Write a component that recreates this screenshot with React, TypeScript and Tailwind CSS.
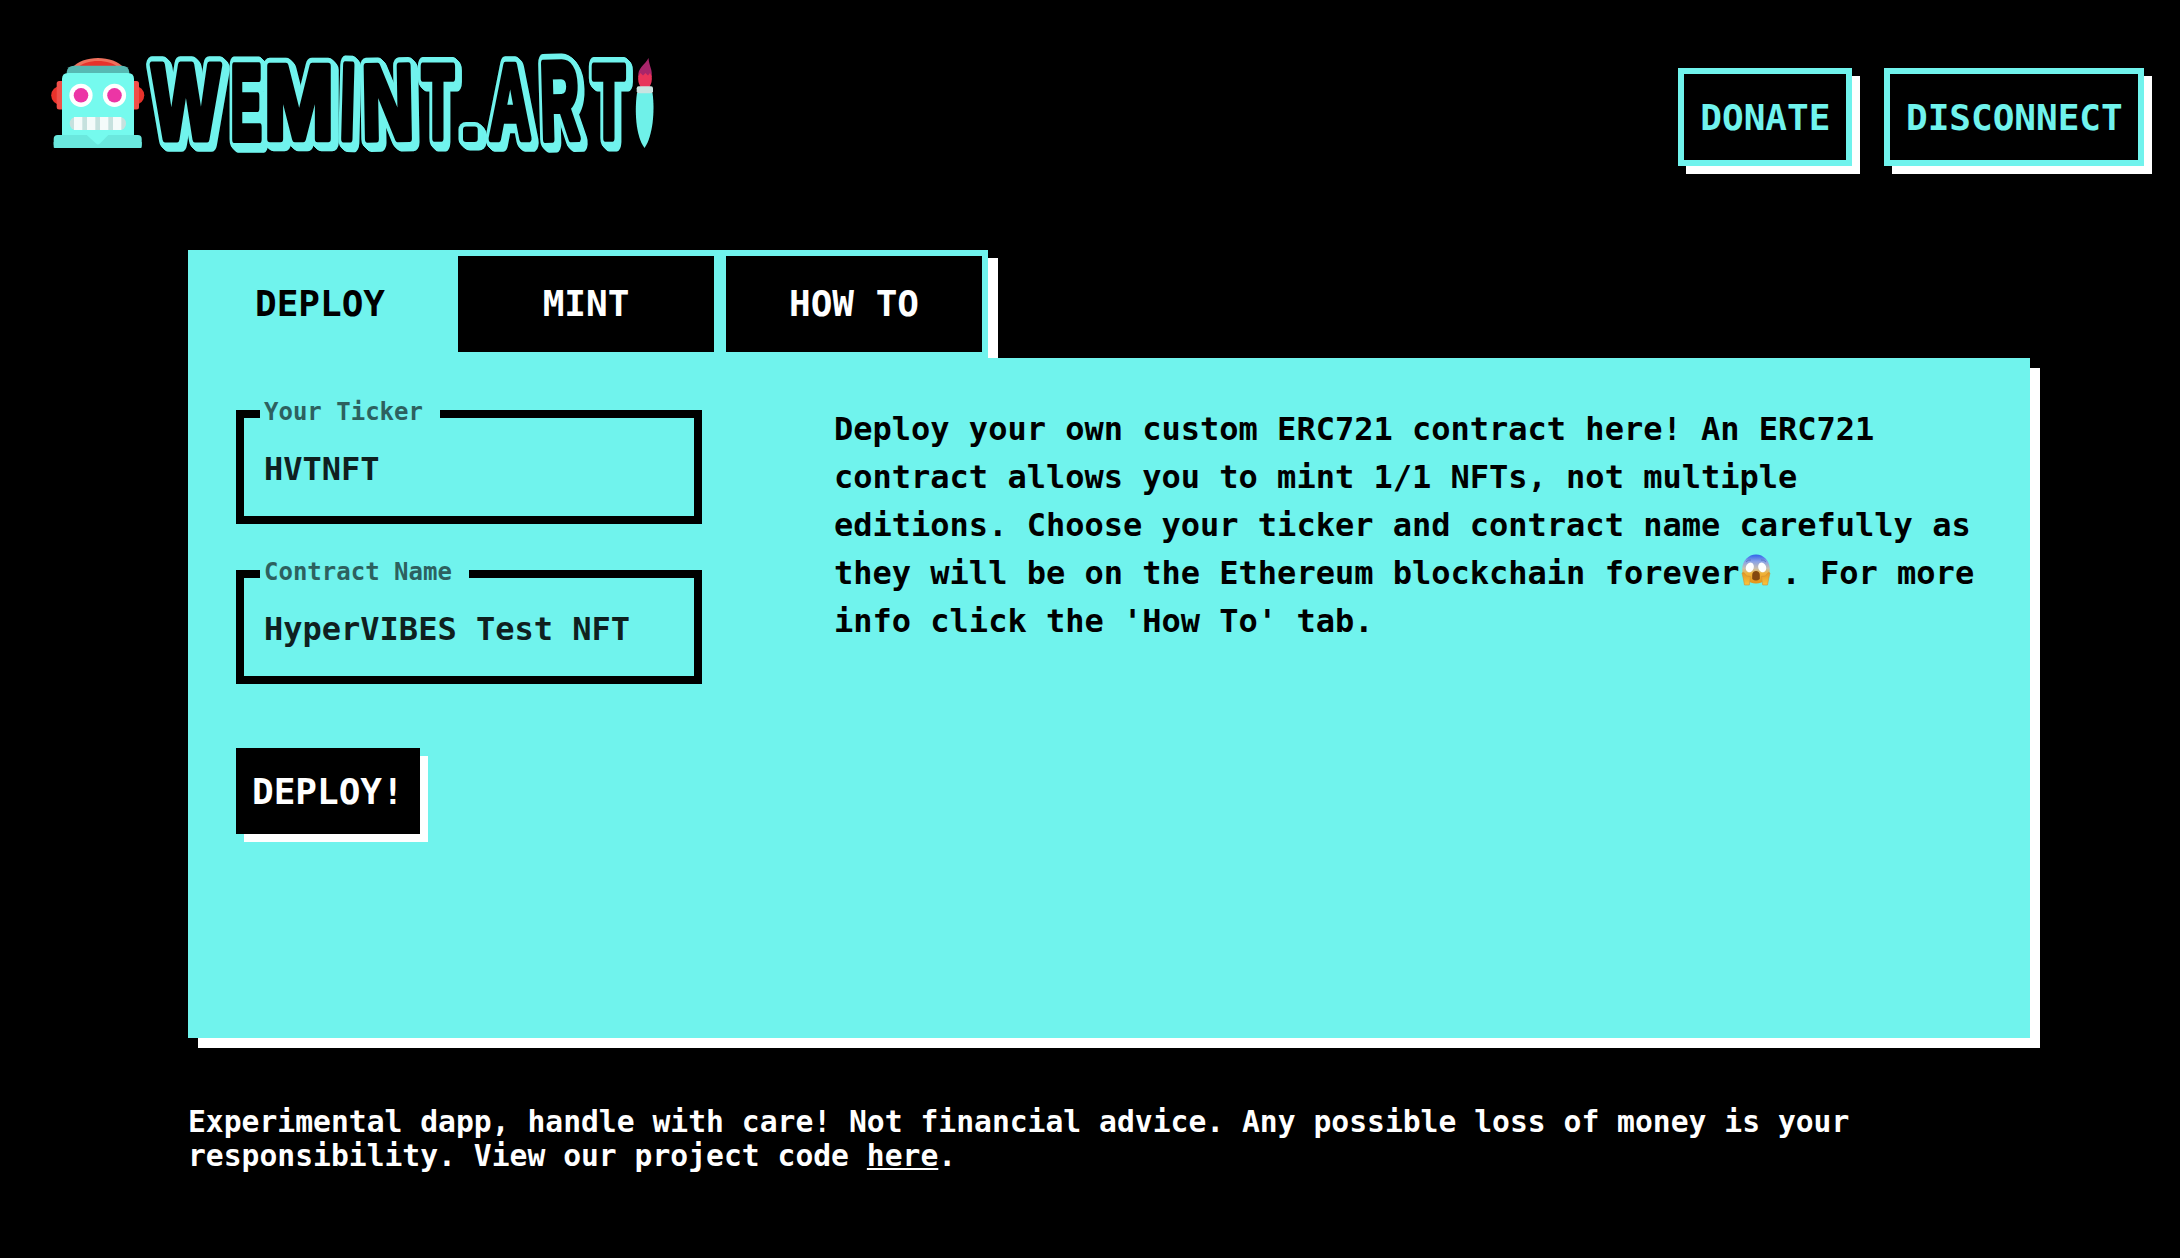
import React from "react";

type Glyph = { ch: string; ink: [number, number]; box: [number, number, number, number]; rotate?: number };

// ink: horizontal extent of the glyph at 100 units; box: left, top, right, bottom on the logo canvas.
const GLYPHS: Glyph[] = [
  { ch: "W", ink: [0.3, 94.2], box: [149, 62, 223, 142] },
  { ch: "E", ink: [7.3, 62.3], box: [231, 63, 263, 142] },
  { ch: "M", ink: [7.1, 76.1], box: [267, 63, 331, 142] },
  { ch: "I", ink: [7.2, 21.6], box: [341, 62, 355, 142], rotate: 1.5 },
  { ch: "N", ink: [7.5, 64], box: [364, 63, 411, 142], rotate: -1 },
  { ch: "T", ink: [2.1, 59], box: [420, 63, 456, 141] },
  { ch: ".", ink: [7.2, 21], box: [463, 127, 478, 142] },
  { ch: "A", ink: [0, 71.8], box: [486, 63, 534, 142] },
  { ch: "R", ink: [7.3, 71.6], box: [541, 60, 582, 142], rotate: -1.5 },
  { ch: "T", ink: [2.1, 59], box: [591, 63, 627, 141] },
];

const INSET = 3.2;

function glyphTransform({ ch, ink, box, rotate = 0 }: Glyph) {
  const [l, t, r, b] = box;
  const inkHeight = ch === "." ? 13.7 : 68.8;
  const sx = (r - l - INSET * 2) / (ink[1] - ink[0]);
  const sy = (b - t - INSET * 2) / inkHeight;
  return `rotate(${rotate} ${(l + r) / 2} ${(t + b) / 2}) translate(${l + INSET - ink[0] * sx} ${b - INSET}) scale(${sx} ${sy})`;
}

function Logo() {
  return (
    <svg className="block h-[120px] w-[630px]" viewBox="40 40 630 120" aria-label="WEMINT.ART">
      <defs>
        <g
          id="wordmark"
          fontFamily="'Liberation Sans', Arial, sans-serif"
          fontWeight="700"
          fontSize="100"
          strokeLinejoin="round"
        >
          {GLYPHS.map((g, i) => (
            <text key={i} transform={glyphTransform(g)} vectorEffect="non-scaling-stroke">
              {g.ch}
            </text>
          ))}
        </g>
      </defs>

      {/* robot */}
      <circle cx="60.5" cy="95.3" r="9.3" fill="#e8322b" />
      <circle cx="135" cy="95.3" r="9.3" fill="#e8322b" />
      <rect x="56.7" y="81" width="8" height="28.5" rx="2.5" fill="#f04f49" />
      <rect x="131" y="81" width="8" height="28.5" rx="2.5" fill="#f04f49" />
      <path d="M72 68 C82 54.5 114 54.5 124 68 Z" fill="#ef705c" />
      <path d="M77 68 C86 58.5 110 58.5 119 68 Z" fill="#e8322b" />
      <path d="M66.7 74 V72 Q67.5 65.8 74 65.8 H122 Q128.5 65.8 129.3 72 V74 Z" fill="#57b9b3" />
      <rect x="53.7" y="135" width="88" height="13" rx="4" fill="#6ae8de" />
      <path d="M53.7 142 H141.7 V147 Q141.7 148 140.7 148 H54.7 Q53.7 148 53.7 147 Z" fill="#6ae8de" />
      <path d="M62 135 V79 Q62 73 68 73 H128 Q134 73 134 79 V135 H108.3 L100 143.5 Q98 145.5 96 143.5 L86.7 135 Z" fill="#75faee" />
      <circle cx="81" cy="95.3" r="11.6" fill="#fff" />
      <circle cx="114.5" cy="95.3" r="11.6" fill="#fff" />
      <circle cx="81" cy="95.3" r="7.3" fill="#ec35a5" />
      <circle cx="114.5" cy="95.3" r="7.3" fill="#ec35a5" />
      <rect x="69.7" y="117" width="56.3" height="13" rx="6.3" fill="#c6e1de" />
      <rect x="74" y="117" width="8.3" height="13" fill="#f4fbfa" />
      <rect x="87" y="117" width="8.3" height="13" fill="#f4fbfa" />
      <rect x="100" y="117" width="8.3" height="13" fill="#f4fbfa" />
      <rect x="113" y="117" width="8.3" height="13" fill="#f4fbfa" />

      {/* wordmark: extruded outline under black faces */}
      <g className="[filter:drop-shadow(1px_1px_0_#70f3ed)_drop-shadow(2px_2px_0_#70f3ed)_drop-shadow(1px_1px_0_#70f3ed)]">
        <use href="#wordmark" fill="#70f3ed" stroke="#70f3ed" strokeWidth="15" />
      </g>
      <use href="#wordmark" fill="#000" stroke="#000" strokeWidth="6" />

      {/* brush */}
      <path d="M648.5 58 C649 66 653 70 651.5 77 H638.5 C637 68 645 65 648.5 58 Z" fill="#a8256a" />
      <path d="M638.3 76 L640.5 73 L643 75.5 L645.5 73 L648 75.5 L650 73 L651.7 76 Q652.5 82 649.5 87 H640.5 Q637.5 82 638.3 76 Z" fill="#e8335a" />
      <path d="M637 93 H652.5 C655 110 653 136 644.5 148 C635.5 136 634.5 110 637 93 Z" fill="#6ff1e9" />
      <rect x="636.7" y="86.3" width="16.3" height="7" rx="2" fill="#c9e4e1" />
    </svg>
  );
}

function ScreamEmoji() {
  return (
    <svg className="ml-[2px] mr-[10px] inline-block h-[32px] w-[30px] align-[-2px]" viewBox="0 0 30 32">
      <defs>
        <linearGradient id="face" x1="0" y1="0" x2="0" y2="1">
          <stop offset="0" stopColor="#2f62ea" />
          <stop offset="0.25" stopColor="#8ba3e6" />
          <stop offset="0.48" stopColor="#c9bfae" />
          <stop offset="0.65" stopColor="#f0b43a" />
          <stop offset="1" stopColor="#e59318" />
        </linearGradient>
        <linearGradient id="hand" x1="0" y1="0" x2="0" y2="1">
          <stop offset="0" stopColor="#e39422" />
          <stop offset="1" stopColor="#fbc53c" />
        </linearGradient>
      </defs>
      <ellipse cx="15" cy="15" rx="13.8" ry="14.5" fill="url(#face)" />
      <path d="M5 8 Q7 5.5 10 6" stroke="#5570b5" strokeWidth="0.8" fill="none" />
      <path d="M20 6 Q23 5.5 25 8" stroke="#5570b5" strokeWidth="0.8" fill="none" />
      <ellipse cx="8.8" cy="13.4" rx="3.9" ry="5" transform="rotate(20 8.8 13.4)" fill="#fff" />
      <ellipse cx="21.2" cy="13.4" rx="3.9" ry="5" transform="rotate(-20 21.2 13.4)" fill="#fff" />
      <path d="M11.2 25 V21 C11.2 15.5 18.8 15.5 18.8 21 V25 Q15 28 11.2 25 Z" fill="#84480f" />
      <path d="M1 19 C2.5 17.5 4 19.5 5.5 22 L9.5 22.5 Q9 27 8.3 31 H3.5 Q2.5 25 1 19 Z" fill="url(#hand)" stroke="#cf8f35" strokeWidth="0.6" />
      <path d="M29 19 C27.5 17.5 26 19.5 24.5 22 L20.5 22.5 Q21 27 21.7 31 H26.5 Q27.5 25 29 19 Z" fill="url(#hand)" stroke="#cf8f35" strokeWidth="0.6" />
    </svg>
  );
}

function HeaderButton({ children }: { children: React.ReactNode }) {
  return (
    <button className="h-[98px] border-6 border-[#70f3ed] bg-black pt-[1px] pr-[15.3px] pl-[16.3px] text-[36px] leading-[42px] whitespace-nowrap text-[#70f3ed] shadow-[8px_8px_0_#fff]">
      {children}
    </button>
  );
}

function Field({ label, value }: { label: string; value: string }) {
  return (
    <div className="relative h-[114px] border-8 border-black">
      <span className="absolute -top-[20px] left-4 bg-[#70f3ed] pr-[16.8px] pl-1 text-[24px] leading-[28px] whitespace-nowrap text-[#2d615f]">
        {label}
      </span>
      <div className="pt-[32px] pl-5 text-[32px] leading-[38px] text-[#0f201f]">{value}</div>
    </div>
  );
}

export default function App() {
  return (
    <div className="h-[1258px] w-[2180px] overflow-hidden bg-black font-['DejaVu_Sans_Mono',monospace] font-bold">
      <header className="flex h-[250px] items-start justify-between pr-9 pl-10">
        <div className="pt-10">
          <Logo />
        </div>
        <div className="flex gap-8 pt-[68px]">
          <HeaderButton>DONATE</HeaderButton>
          <HeaderButton>DISCONNECT</HeaderButton>
        </div>
      </header>

      <main className="ml-[188px] w-[1842px]">
        <nav className="flex h-[108px] w-[800px] text-[36px] leading-[42px] text-white shadow-[10px_8px_0_#fff]">
          <button className="w-[264px] bg-[#70f3ed] text-black">DEPLOY</button>
          <button className="w-[268px] border-6 border-[#70f3ed] bg-black">MINT</button>
          <button className="w-[268px] border-6 border-[#70f3ed] bg-black">HOW TO</button>
        </nav>
        <section className="relative flex h-[680px] justify-between bg-[#70f3ed] px-12 pt-[52px] shadow-[10px_10px_0_#fff]">
          <div className="flex w-[466px] flex-col items-stretch">
            <Field label="Your Ticker" value="HVTNFT" />
            <div className="mt-[46px]">
              <Field label="Contract Name" value="HyperVIBES Test NFT" />
            </div>
            <button className="mt-[64px] h-[86px] self-start bg-black px-4 pt-[2px] text-[36px] leading-[42px] text-white shadow-[8px_8px_0_#fff]">
              DEPLOY!
            </button>
          </div>
          <p className="-mt-[5px] w-[1148px] text-[32px] leading-[48px] text-black">
            Deploy your own custom ERC721 contract here! An ERC721 contract allows you to mint 1/1 NFTs, not multiple
            editions. Choose your ticker and contract name carefully as they will be on the Ethereum blockchain forever
            <ScreamEmoji />. For more info click the 'How To' tab.
          </p>
        </section>
        <footer className="mt-[67px] text-[29.68px] leading-[34px] text-white">
          Experimental dapp, handle with care! Not financial advice. Any possible loss of money is your
          responsibility. View our project code{" "}
          <a href="#" className="underline">
            here
          </a>
          .
        </footer>
      </main>
    </div>
  );
}
